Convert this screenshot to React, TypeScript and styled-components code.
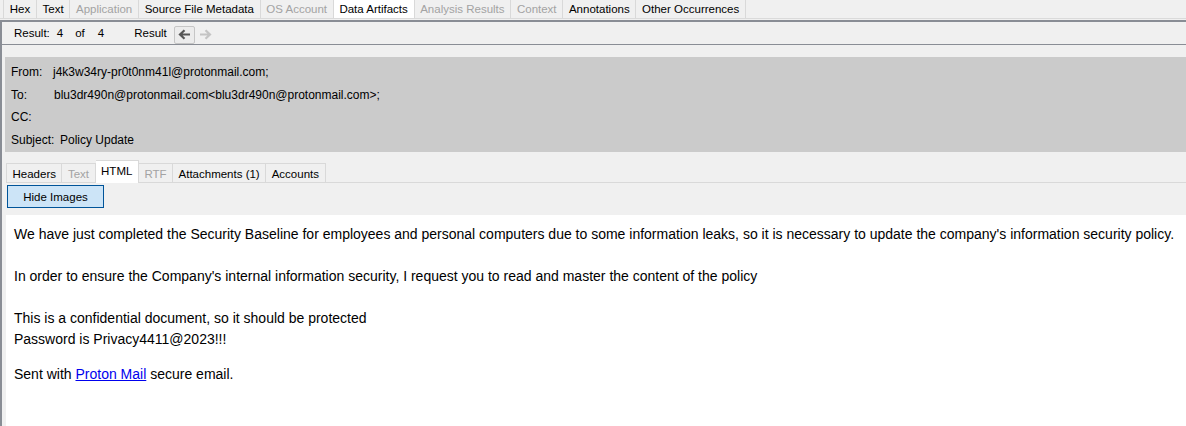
import React from "react";
import styled, { createGlobalStyle } from "styled-components";

const Global = createGlobalStyle`
  html, body { margin: 0; padding: 0; background: #f0f0f0; }
  body { font-family: "Liberation Sans", Arial, sans-serif; color: #000; }
`;

const Page = styled.div`
  width: 1186px;
  height: 426px;
  overflow: hidden;
  background: #f0f0f0;
  display: flex;
  flex-direction: column;
`;

const TabStrip = styled.div`
  display: flex;
  height: 18px;
  padding-left: 3px;
  border-bottom: 1px solid #dadada;
`;

const TopTab = styled.div<{ $active?: boolean; $disabled?: boolean }>`
  height: 18px;
  box-sizing: border-box;
  padding: 1px 5.7px 0;
  line-height: 17px;
  font-size: 11.5px;
  white-space: nowrap;
  color: ${(p) => (p.$disabled ? "#a3a3a3" : "#000")};
  background: ${(p) => (p.$active ? "#ffffff" : "transparent")};
  border-right: 1px solid #d9d9d9;
  &:first-child {
    border-left: 1px solid #d9d9d9;
  }
`;

const Panel = styled.div`
  flex: 1;
  min-height: 0;
  margin-top: 1px;
  border-top: 2px solid #898d95;
  border-left: 2px solid #898d95;
  display: flex;
  flex-direction: column;
`;

const Toolbar = styled.div`
  height: 22px;
  display: flex;
  align-items: center;
  padding-left: 12px;
  border-bottom: 1px solid #898d95;
  font-size: 11.5px;
`;

const ToolText = styled.span<{ $ml?: number }>`
  margin-left: ${(p) => p.$ml ?? 0}px;
  white-space: nowrap;
`;

const NavGroup = styled.div`
  display: flex;
  margin-left: 7px;
  margin-top: 3px;
`;

const NavButton = styled.div<{ $raised?: boolean }>`
  width: 21px;
  height: 18px;
  box-sizing: border-box;
  display: flex;
  align-items: center;
  justify-content: center;
  border: 1px solid ${(p) => (p.$raised ? "#c6c6c6" : "transparent")};
  border-radius: 2px;
  background: ${(p) => (p.$raised ? "#ececec" : "transparent")};
`;

const HeaderBlock = styled.div`
  margin: 12px 0 0 3px;
  padding: 4px 0 1px 6px;
  background: #cbcbcb;
  font-size: 12px;
`;

const HeaderRow = styled.div`
  display: flex;
  height: 22.5px;
  line-height: 22.5px;
  white-space: nowrap;
`;

const HeaderLabel = styled.span<{ $w?: number }>`
  display: inline-block;
  min-width: ${(p) => p.$w ?? 0}px;
`;

const SubTabStrip = styled.div`
  display: flex;
  align-items: flex-end;
  height: 22px;
  margin: 8px 0 0 4px;
  border-bottom: 1px solid #d9d9d9;
`;

const SubTab = styled.div<{ $active?: boolean; $disabled?: boolean }>`
  height: ${(p) => (p.$active ? 23 : 20)}px;
  box-sizing: border-box;
  padding: 0 5.5px ${(p) => (p.$active ? 3 : 0)}px;
  margin-bottom: -1px;
  line-height: 20px;
  font-size: 11.5px;
  white-space: nowrap;
  color: ${(p) => (p.$disabled ? "#a3a3a3" : "#000")};
  background: ${(p) => (p.$active ? "#ffffff" : "transparent")};
  border: 1px solid #d9d9d9;
  border-bottom: none;
  & + & {
    border-left: none;
  }
`;

const HideButton = styled.button`
  width: 97px;
  height: 23px;
  margin: 2px 0 0 5px;
  padding: 0;
  background: #cce4f7;
  border: 1px solid #005499;
  font-family: "Liberation Sans", Arial, sans-serif;
  font-size: 11.5px;
  color: #000;
  text-align: center;
`;

const Content = styled.div`
  flex: 1;
  margin: 7px 0 0 4px;
  padding: 9px 8px;
  background: #ffffff;
  font-family: "Liberation Sans", Arial, sans-serif;
  font-size: 14px;
  line-height: 21px;
  color: #000;
  white-space: nowrap;
`;

const Signature = styled.div`
  margin-top: 14px;
`;

const Link = styled.a`
  color: #0000ee;
  text-decoration: underline;
`;

const Arrow = ({ dir, color }: { dir: "left" | "right"; color: string }) => (
  <svg width="13" height="11" viewBox="0 0 13 11">
    <g transform={dir === "right" ? "translate(13,0) scale(-1,1)" : undefined}>
      <path
        d="M12 5.5H2.2M6.5 1.2L2 5.5L6.5 9.8"
        fill="none"
        stroke={color}
        strokeWidth="2.2"
        strokeLinecap="butt"
        strokeLinejoin="miter"
      />
    </g>
  </svg>
);

const topTabs: { label: string; active?: boolean; disabled?: boolean }[] = [
  { label: "Hex" },
  { label: "Text" },
  { label: "Application", disabled: true },
  { label: "Source File Metadata" },
  { label: "OS Account", disabled: true },
  { label: "Data Artifacts", active: true },
  { label: "Analysis Results", disabled: true },
  { label: "Context", disabled: true },
  { label: "Annotations" },
  { label: "Other Occurrences" },
];

const subTabs: { label: string; active?: boolean; disabled?: boolean }[] = [
  { label: "Headers" },
  { label: "Text", disabled: true },
  { label: "HTML", active: true },
  { label: "RTF", disabled: true },
  { label: "Attachments (1)" },
  { label: "Accounts" },
];

export default function App() {
  return (
    <Page>
      <Global />
      <TabStrip>
        {topTabs.map((t) => (
          <TopTab key={t.label} $active={t.active} $disabled={t.disabled}>
            {t.label}
          </TopTab>
        ))}
      </TabStrip>
      <Panel>
        <Toolbar>
          <ToolText>Result:</ToolText>
          <ToolText $ml={7}>4</ToolText>
          <ToolText $ml={12}>of</ToolText>
          <ToolText $ml={13}>4</ToolText>
          <ToolText $ml={30}>Result</ToolText>
          <NavGroup>
            <NavButton $raised>
              <Arrow dir="left" color="#555555" />
            </NavButton>
            <NavButton>
              <Arrow dir="right" color="#c4c4c4" />
            </NavButton>
          </NavGroup>
        </Toolbar>
        <HeaderBlock>
          <HeaderRow>
            <HeaderLabel $w={42}>From:</HeaderLabel>
            <span>j4k3w34ry-pr0t0nm41l@protonmail.com;</span>
          </HeaderRow>
          <HeaderRow>
            <HeaderLabel $w={43}>To:</HeaderLabel>
            <span>blu3dr490n@protonmail.com&lt;blu3dr490n@protonmail.com&gt;;</span>
          </HeaderRow>
          <HeaderRow>
            <HeaderLabel>CC:</HeaderLabel>
          </HeaderRow>
          <HeaderRow>
            <HeaderLabel $w={49}>Subject:</HeaderLabel>
            <span>Policy Update</span>
          </HeaderRow>
        </HeaderBlock>
        <SubTabStrip>
          {subTabs.map((t) => (
            <SubTab key={t.label} $active={t.active} $disabled={t.disabled}>
              {t.label}
            </SubTab>
          ))}
        </SubTabStrip>
        <div>
          <HideButton>Hide Images</HideButton>
        </div>
        <Content>
          We have just completed the Security Baseline for employees and personal computers due to some
          information leaks, so it is necessary to update the company's information security policy.
          <br />
          <br />
          In order to ensure the Company's internal information security, I request you to read and master
          the content of the policy
          <br />
          <br />
          This is a confidential document, so it should be protected
          <br />
          Password is Privacy4411@2023!!!
          <Signature>
            Sent with <Link href="#">Proton Mail</Link> secure email.
          </Signature>
        </Content>
      </Panel>
    </Page>
  );
}
